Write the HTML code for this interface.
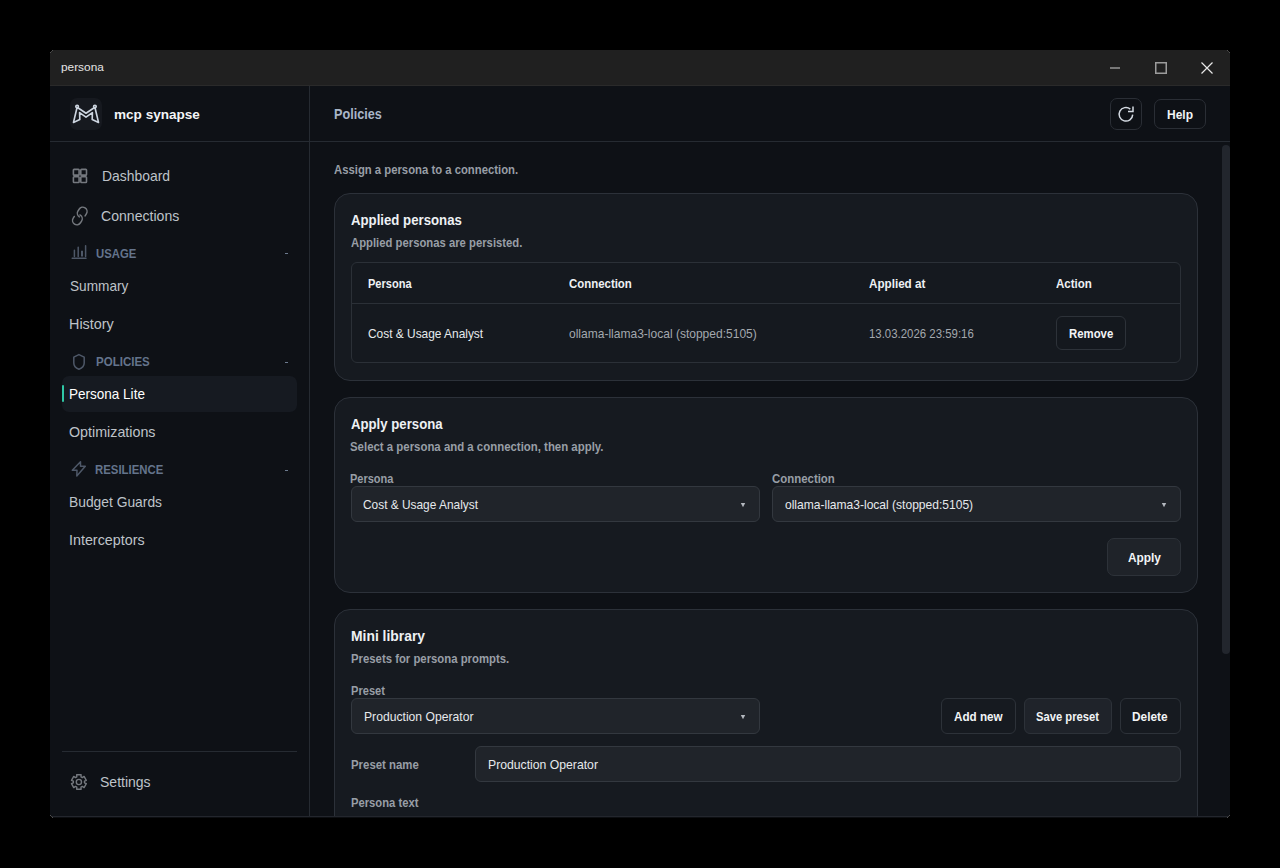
<!DOCTYPE html>
<html><head><meta charset="utf-8">
<style>
*{box-sizing:border-box;margin:0;padding:0}
html,body{width:1280px;height:868px;background:#000;overflow:hidden;font-family:"Liberation Sans",sans-serif;position:relative}
.abs{position:absolute}
.t{position:absolute;white-space:nowrap;line-height:1;transform-origin:0 0}
#clip{position:absolute;left:0;top:0;width:1280px;height:816px;overflow:hidden}
</style></head>
<body>
<div class="abs" style="left:50px;top:50px;width:1180px;height:767px;background:#0e1116;border-radius:0px;"></div>
<div class="abs" style="left:50px;top:50px;width:1180px;height:35px;background:#202020;border-radius:0px;"></div>
<div class="abs" style="left:50px;top:85px;width:1180px;height:1px;background:#2a2a2a;border-radius:0px;"></div>
<div class="abs" style="left:50px;top:816px;width:1180px;height:1px;background:#23262d;border-radius:0px;"></div>
<div class="abs" style="left:50px;top:817px;width:1180px;height:1px;background:#0c0e11;border-radius:0px;"></div>
<div class="abs" style="left:309px;top:86px;width:1px;height:730px;background:#262b32;border-radius:0px;"></div>
<div class="abs" style="left:50px;top:141px;width:1180px;height:1px;background:#262b32;border-radius:0px;"></div>
<div class="abs" style="left:70px;top:98px;width:32px;height:32px;background:#16191f;border-radius:7px;"></div>
<div class="abs" style="left:62px;top:376px;width:235px;height:36px;background:#161a21;border-radius:7px;"></div>
<div class="abs" style="left:62px;top:385px;width:2px;height:17px;background:#2fc7a6;border-radius:1px;"></div>
<div class="abs" style="left:62px;top:751px;width:235px;height:1px;background:#262b32;border-radius:0px;"></div>
<div class="abs" style="left:1110px;top:98px;width:32px;height:32px;background:#0e1116;border-radius:7px;border:1px solid #2a2e35;"></div>
<div class="abs" style="left:1154px;top:99px;width:52px;height:30px;background:#0e1116;border-radius:7px;border:1px solid #2a2e35;"></div>
<div class="abs" style="left:1222px;top:145px;width:8px;height:509px;background:#22262d;border-radius:4px;"></div>
<div class="abs" style="left:334px;top:193px;width:864px;height:188px;background:#161a20;border-radius:16px;border:1px solid #2c3139;"></div>
<div class="abs" style="left:351px;top:262px;width:830px;height:101px;background:#15191f;border-radius:6px;border:1px solid #2b3037;"></div>
<div class="abs" style="left:352px;top:303px;width:828px;height:1px;background:#2b3037;border-radius:0px;"></div>
<div class="abs" style="left:1056px;top:316px;width:70px;height:34px;background:#14181e;border-radius:6px;border:1px solid #2d3239;"></div>
<div class="abs" style="left:334px;top:397px;width:864px;height:196px;background:#161a20;border-radius:16px;border:1px solid #2c3139;"></div>
<div class="abs" style="left:351px;top:486px;width:409px;height:36px;background:#20242a;border-radius:6px;border:1px solid #33383f;"></div>
<div class="abs" style="left:772px;top:486px;width:409px;height:36px;background:#20242a;border-radius:6px;border:1px solid #33383f;"></div>
<div class="abs" style="left:1107px;top:538px;width:74px;height:38px;background:#1f2329;border-radius:7px;border:1px solid #2d3239;"></div>
<div id="clip"><div class="abs" style="left:334px;top:609px;width:864px;height:291px;background:#161a20;border-radius:16px;border:1px solid #2c3139;"></div></div>
<div class="abs" style="left:351px;top:698px;width:409px;height:36px;background:#20242a;border-radius:6px;border:1px solid #33383f;"></div>
<div class="abs" style="left:941px;top:698px;width:75px;height:36px;background:#161a20;border-radius:6px;border:1px solid #2d3239;"></div>
<div class="abs" style="left:1024px;top:698px;width:88px;height:36px;background:#1f232a;border-radius:6px;border:1px solid #2d3239;"></div>
<div class="abs" style="left:1120px;top:698px;width:61px;height:36px;background:#161a20;border-radius:6px;border:1px solid #2d3239;"></div>
<div class="abs" style="left:475px;top:746px;width:706px;height:36px;background:#20242a;border-radius:6px;border:1px solid #33383f;"></div>
<div class="abs" style="left:50px;top:50px;width:1px;height:1px;background:#000;border-radius:0px;"></div>
<div class="abs" style="left:51px;top:50px;width:1px;height:1px;background:#000;border-radius:0px;"></div>
<div class="abs" style="left:50px;top:51px;width:1px;height:1px;background:#000;border-radius:0px;"></div>
<div class="abs" style="left:50px;top:52px;width:1px;height:1px;background:#505050;border-radius:0px;"></div>
<div class="abs" style="left:51px;top:51px;width:1px;height:1px;background:#404040;border-radius:0px;"></div>
<div class="abs" style="left:52px;top:50px;width:1px;height:1px;background:#505050;border-radius:0px;"></div>
<div class="abs" style="left:1229px;top:50px;width:1px;height:1px;background:#000;border-radius:0px;"></div>
<div class="abs" style="left:1228px;top:50px;width:1px;height:1px;background:#000;border-radius:0px;"></div>
<div class="abs" style="left:1229px;top:51px;width:1px;height:1px;background:#000;border-radius:0px;"></div>
<div class="abs" style="left:1227px;top:50px;width:1px;height:1px;background:#505050;border-radius:0px;"></div>
<div class="abs" style="left:1228px;top:51px;width:1px;height:1px;background:#404040;border-radius:0px;"></div>
<div class="abs" style="left:1229px;top:52px;width:1px;height:1px;background:#505050;border-radius:0px;"></div>
<div class="abs" style="left:50px;top:817px;width:1px;height:1px;background:#000;border-radius:0px;"></div>
<div class="abs" style="left:51px;top:817px;width:1px;height:1px;background:#000;border-radius:0px;"></div>
<div class="abs" style="left:50px;top:816px;width:1px;height:1px;background:#000;border-radius:0px;"></div>
<div class="abs" style="left:50px;top:815px;width:1px;height:1px;background:#505050;border-radius:0px;"></div>
<div class="abs" style="left:51px;top:816px;width:1px;height:1px;background:#404040;border-radius:0px;"></div>
<div class="abs" style="left:52px;top:817px;width:1px;height:1px;background:#505050;border-radius:0px;"></div>
<div class="abs" style="left:1229px;top:817px;width:1px;height:1px;background:#000;border-radius:0px;"></div>
<div class="abs" style="left:1228px;top:817px;width:1px;height:1px;background:#000;border-radius:0px;"></div>
<div class="abs" style="left:1229px;top:816px;width:1px;height:1px;background:#000;border-radius:0px;"></div>
<div class="abs" style="left:1229px;top:815px;width:1px;height:1px;background:#505050;border-radius:0px;"></div>
<div class="abs" style="left:1228px;top:816px;width:1px;height:1px;background:#404040;border-radius:0px;"></div>
<div class="abs" style="left:1227px;top:817px;width:1px;height:1px;background:#505050;border-radius:0px;"></div>
<div class="t" style="left:61.37px;top:61.00px;font-size:11.6px;font-weight:400;color:#e4e4e4;transform:scaleX(1.0219)">persona</div>
<div class="t" style="left:113.60px;top:108.00px;font-size:13.6px;font-weight:700;color:#f3f5f7;transform:scaleX(0.9970)">mcp synapse</div>
<div class="t" style="left:101.61px;top:169.00px;font-size:14.6px;font-weight:400;color:#bec3c9;transform:scaleX(0.9533)">Dashboard</div>
<div class="t" style="left:101.13px;top:209.00px;font-size:14.6px;font-weight:400;color:#bec3c9;transform:scaleX(0.9646)">Connections</div>
<div class="t" style="left:95.89px;top:247.00px;font-size:13.3px;font-weight:700;color:#64748c;transform:scaleX(0.8510)">USAGE</div>
<div class="t" style="left:69.53px;top:279.00px;font-size:14.6px;font-weight:400;color:#bec3c9;transform:scaleX(0.9343)">Summary</div>
<div class="t" style="left:69.38px;top:317.00px;font-size:14.6px;font-weight:400;color:#bec3c9;transform:scaleX(0.9853)">History</div>
<div class="t" style="left:95.53px;top:355.00px;font-size:13.3px;font-weight:700;color:#64748c;transform:scaleX(0.8668)">POLICIES</div>
<div class="t" style="left:69.43px;top:387.00px;font-size:14.6px;font-weight:400;color:#ffffff;transform:scaleX(0.9263)">Persona Lite</div>
<div class="t" style="left:69.35px;top:425.00px;font-size:14.6px;font-weight:400;color:#bec3c9;transform:scaleX(0.9782)">Optimizations</div>
<div class="t" style="left:95.44px;top:463.00px;font-size:13.3px;font-weight:700;color:#64748c;transform:scaleX(0.8561)">RESILIENCE</div>
<div class="t" style="left:69.11px;top:495.00px;font-size:14.6px;font-weight:400;color:#bec3c9;transform:scaleX(0.9474)">Budget Guards</div>
<div class="t" style="left:69.05px;top:533.00px;font-size:14.6px;font-weight:400;color:#bec3c9;transform:scaleX(0.9807)">Interceptors</div>
<div class="t" style="left:99.51px;top:775.00px;font-size:14.6px;font-weight:400;color:#bec3c9;transform:scaleX(0.9600)">Settings</div>
<div class="t" style="left:333.57px;top:107.00px;font-size:14.5px;font-weight:700;color:#a9b6c8;transform:scaleX(0.8722)">Policies</div>
<div class="t" style="left:1167.19px;top:108.00px;font-size:13.1px;font-weight:700;color:#f2f4f6;transform:scaleX(0.9157)">Help</div>
<div class="t" style="left:333.89px;top:163.00px;font-size:13.0px;font-weight:700;color:#989ea6;transform:scaleX(0.8699)">Assign a persona to a connection.</div>
<div class="t" style="left:350.80px;top:213.00px;font-size:14.8px;font-weight:700;color:#eef1f4;transform:scaleX(0.8928)">Applied personas</div>
<div class="t" style="left:350.68px;top:237.00px;font-size:12.75px;font-weight:700;color:#989ea6;transform:scaleX(0.8861)">Applied personas are persisted.</div>
<div class="t" style="left:367.59px;top:277.00px;font-size:13.0px;font-weight:700;color:#eef1f4;transform:scaleX(0.8487)">Persona</div>
<div class="t" style="left:568.81px;top:277.00px;font-size:13.0px;font-weight:700;color:#eef1f4;transform:scaleX(0.8787)">Connection</div>
<div class="t" style="left:869.17px;top:277.00px;font-size:13.0px;font-weight:700;color:#eef1f4;transform:scaleX(0.8965)">Applied at</div>
<div class="t" style="left:1056.08px;top:277.00px;font-size:13.0px;font-weight:700;color:#eef1f4;transform:scaleX(0.8866)">Action</div>
<div class="t" style="left:367.52px;top:327.00px;font-size:13.0px;font-weight:400;color:#e6e9ec;transform:scaleX(0.9157)">Cost &amp; Usage Analyst</div>
<div class="t" style="left:568.61px;top:327.00px;font-size:13.0px;font-weight:400;color:#a3a8ae;transform:scaleX(0.9247)">ollama-llama3-local (stopped:5105)</div>
<div class="t" style="left:868.85px;top:327.00px;font-size:13.0px;font-weight:400;color:#a3a8ae;transform:scaleX(0.8782)">13.03.2026 23:59:16</div>
<div class="t" style="left:1069.23px;top:327.00px;font-size:13.1px;font-weight:700;color:#f2f4f6;transform:scaleX(0.8693)">Remove</div>
<div class="t" style="left:350.65px;top:417.00px;font-size:14.8px;font-weight:700;color:#eef1f4;transform:scaleX(0.8909)">Apply persona</div>
<div class="t" style="left:350.49px;top:441.00px;font-size:12.75px;font-weight:700;color:#989ea6;transform:scaleX(0.8952)">Select a persona and a connection, then apply.</div>
<div class="t" style="left:350.45px;top:472.00px;font-size:13.0px;font-weight:700;color:#989ea6;transform:scaleX(0.8467)">Persona</div>
<div class="t" style="left:771.56px;top:472.00px;font-size:13.0px;font-weight:700;color:#989ea6;transform:scaleX(0.8787)">Connection</div>
<div class="t" style="left:363.17px;top:498.00px;font-size:13.0px;font-weight:400;color:#e6e9ec;transform:scaleX(0.9145)">Cost &amp; Usage Analyst</div>
<div class="t" style="left:784.51px;top:498.00px;font-size:13.0px;font-weight:400;color:#e6e9ec;transform:scaleX(0.9264)">ollama-llama3-local (stopped:5105)</div>
<div class="t" style="left:1127.67px;top:551.00px;font-size:13.1px;font-weight:700;color:#f2f4f6;transform:scaleX(0.9058)">Apply</div>
<div class="t" style="left:350.50px;top:629.00px;font-size:14.8px;font-weight:700;color:#eef1f4;transform:scaleX(0.9381)">Mini library</div>
<div class="t" style="left:350.61px;top:653.00px;font-size:12.75px;font-weight:700;color:#989ea6;transform:scaleX(0.8894)">Presets for persona prompts.</div>
<div class="t" style="left:350.64px;top:684.00px;font-size:13.0px;font-weight:700;color:#989ea6;transform:scaleX(0.8529)">Preset</div>
<div class="t" style="left:363.58px;top:710.00px;font-size:13.0px;font-weight:400;color:#e6e9ec;transform:scaleX(0.9350)">Production Operator</div>
<div class="t" style="left:953.88px;top:710.00px;font-size:13.1px;font-weight:700;color:#f2f4f6;transform:scaleX(0.8927)">Add new</div>
<div class="t" style="left:1036.01px;top:710.00px;font-size:13.1px;font-weight:700;color:#f2f4f6;transform:scaleX(0.8567)">Save preset</div>
<div class="t" style="left:1132.40px;top:710.00px;font-size:13.1px;font-weight:700;color:#f2f4f6;transform:scaleX(0.9054)">Delete</div>
<div class="t" style="left:350.62px;top:758.00px;font-size:13.0px;font-weight:700;color:#989ea6;transform:scaleX(0.8768)">Preset name</div>
<div class="t" style="left:487.67px;top:758.00px;font-size:13.0px;font-weight:400;color:#e6e9ec;transform:scaleX(0.9393)">Production Operator</div>
<div class="t" style="left:350.63px;top:796.00px;font-size:13.0px;font-weight:700;color:#989ea6;transform:scaleX(0.8646)">Persona text</div>
<div class="abs" style="left:285px;top:253px;width:3px;height:1px;background:#6c7a8e;border-radius:0px;"></div>
<div class="abs" style="left:285px;top:362px;width:3px;height:1px;background:#6c7a8e;border-radius:0px;"></div>
<div class="abs" style="left:285px;top:470px;width:3px;height:1px;background:#6c7a8e;border-radius:0px;"></div>
<svg class="abs" style="left:740px;top:501.8px;overflow:visible" width="6" height="6"><path d="M0.8 1 L5.2 1 L3 5.2 Z" fill="#b4b9c0"/></svg>
<svg class="abs" style="left:1161px;top:501.8px;overflow:visible" width="6" height="6"><path d="M0.8 1 L5.2 1 L3 5.2 Z" fill="#b4b9c0"/></svg>
<svg class="abs" style="left:740px;top:713.8px;overflow:visible" width="6" height="6"><path d="M0.8 1 L5.2 1 L3 5.2 Z" fill="#b4b9c0"/></svg>

<svg class="abs" style="left:0;top:0;overflow:visible" width="1280" height="868">
<path d="M1110 68 H1120" stroke="#a8a8a8" stroke-width="1.3"/>
<rect x="1155.75" y="62.75" width="10.5" height="10.5" fill="none" stroke="#9c9c9c" stroke-width="1.5"/>
<path d="M1201.5 62.5 L1212.5 73.5 M1212.5 62.5 L1201.5 73.5" stroke="#e8e8e8" stroke-width="1.2"/>
<g fill="none" stroke="#74787e" stroke-width="1.6"><rect x="73.4" y="169.4" width="5.7" height="5.7" rx="0.7"/><rect x="80.8" y="169.4" width="5.7" height="5.7" rx="0.7"/><rect x="73.4" y="176.8" width="5.7" height="5.7" rx="0.7"/><rect x="80.8" y="176.8" width="5.7" height="5.7" rx="0.7"/></g>
<g fill="none" stroke="#74787e" stroke-width="1.5" stroke-linecap="round"><g transform="translate(82.2 212.4) rotate(-57)"><path d="M-1.0 -4.3 H1.0 A4.3 4.3 0 0 1 1.0 4.3 H-1.0 A4.3 4.3 0 0 1 -1.0 -4.3 Z" stroke-dasharray="17.5 6.2 7.32 0"/></g><g transform="translate(77.4 219.6) rotate(-57)"><path d="M-1.0 -4.3 H1.0 A4.3 4.3 0 0 1 1.0 4.3 H-1.0 A4.3 4.3 0 0 1 -1.0 -4.3 Z" stroke-dasharray="2 6.2 22.82 0"/></g></g>
<g fill="none" stroke="#4e5868" stroke-width="1.5" stroke-linecap="round"><path d="M72.2 258.2 H86"/><path d="M74.4 250.2 V256.5 M78.2 247.2 V256.5 M85.6 245.8 V256.5"/></g>
<path d="M82 250.8 V256.5" stroke="#4e5868" stroke-width="2"/>
<path d="M78.9 354.6 L84.2 357.2 V363 C84.2 366 81.8 368.2 78.9 369.2 C76 368.2 73.8 366 73.8 363 V357.2 Z" fill="none" stroke="#4e5868" stroke-width="1.5" stroke-linejoin="round"/>
<path d="M80.5 461.8 L72.3 470.2 H77 L76.8 476 L85.3 466.2 H80.5 Z" fill="none" stroke="#4e5868" stroke-width="1.5" stroke-linejoin="round"/>
<g fill="none" stroke="#74787e" stroke-width="1.4" stroke-linejoin="round"><path d="M76.80 776.81 L76.68 774.73 L81.12 774.73 L81.00 776.81 L82.35 777.59 L84.08 776.44 L86.31 780.29 L84.45 781.22 L84.45 782.78 L86.31 783.71 L84.08 787.56 L82.35 786.41 L81.00 787.19 L81.12 789.27 L76.68 789.27 L76.80 787.19 L75.45 786.41 L73.72 787.56 L71.49 783.71 L73.35 782.78 L73.35 781.22 L71.49 780.29 L73.72 776.44 L75.45 777.59 Z"/><circle cx="78.9" cy="782" r="2.6"/></g>
<g fill="none" stroke="#d4dae2" stroke-width="1.5"><path d="M1132.7 114.6 A6.8 6.8 0 1 1 1130.3 109.1"/><path d="M1133 106.6 V111.6 H1128"/></g>
<g fill="none" stroke="#cdd5e0" stroke-width="1.65" stroke-linejoin="round"><path d="M77.1 107.2 L73.5 122.4 L79.8 119.6 L79.6 112.6 L86 117.1 L92.4 112.6 L92.2 119.6 L98.5 122.4 L94.9 107.2 L86 113.2 Z"/><circle cx="77.1" cy="106.6" r="1.3" fill="#16191f"/><circle cx="94.9" cy="106.6" r="1.3" fill="#16191f"/></g>
</svg>

</body></html>
